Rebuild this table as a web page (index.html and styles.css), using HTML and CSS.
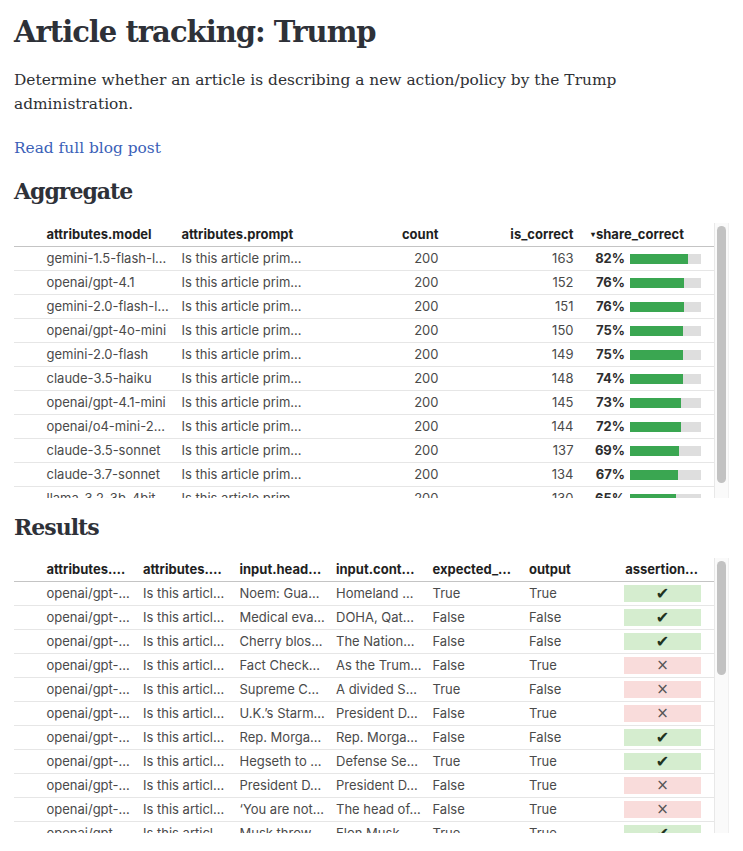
FILE: index.html
```html
<!DOCTYPE html>
<html lang="en">
<head>
<meta charset="utf-8">
<title>Article tracking: Trump</title>
<link rel="stylesheet" href="styles.css">
</head>
<body>
<main class="page">
  <h1 class="title">Article tracking: Trump</h1>
  <p class="lead">Determine whether an article is describing a new action/policy by the Trump administration.</p>
  <p class="lead link-line"><a class="link" href="#">Read full blog post</a></p>

  <h2 class="section">Aggregate</h2>
  <div class="table-frame">
    <div class="table-scroll">
      <table class="data agg">
        <colgroup>
          <col class="c-sel"><col class="c-a"><col class="c-a"><col class="c-a"><col class="c-a"><col class="c-last">
        </colgroup>
        <thead>
          <tr><th></th><th>attributes.model</th><th>attributes.prompt</th><th class="num">count</th><th class="num">is_correct</th><th class="share-h"><span class="sort">▾</span>share_correct</th></tr>
        </thead>
        <tbody>
          <tr><td></td><td>gemini-1.5-flash-l…</td><td>Is this article prim…</td><td class="num">200</td><td class="num">163</td><td class="share"><div class="share-in"><span class="pct">82%</span><span class="bar"><span class="fill" style="width:81.5%"></span></span></div></td></tr>
          <tr><td></td><td>openai/gpt-4.1</td><td>Is this article prim…</td><td class="num">200</td><td class="num">152</td><td class="share"><div class="share-in"><span class="pct">76%</span><span class="bar"><span class="fill" style="width:76%"></span></span></div></td></tr>
          <tr><td></td><td>gemini-2.0-flash-l…</td><td>Is this article prim…</td><td class="num">200</td><td class="num">151</td><td class="share"><div class="share-in"><span class="pct">76%</span><span class="bar"><span class="fill" style="width:75.5%"></span></span></div></td></tr>
          <tr><td></td><td>openai/gpt-4o-mini</td><td>Is this article prim…</td><td class="num">200</td><td class="num">150</td><td class="share"><div class="share-in"><span class="pct">75%</span><span class="bar"><span class="fill" style="width:75%"></span></span></div></td></tr>
          <tr><td></td><td>gemini-2.0-flash</td><td>Is this article prim…</td><td class="num">200</td><td class="num">149</td><td class="share"><div class="share-in"><span class="pct">75%</span><span class="bar"><span class="fill" style="width:74.5%"></span></span></div></td></tr>
          <tr><td></td><td>claude-3.5-haiku</td><td>Is this article prim…</td><td class="num">200</td><td class="num">148</td><td class="share"><div class="share-in"><span class="pct">74%</span><span class="bar"><span class="fill" style="width:74%"></span></span></div></td></tr>
          <tr><td></td><td>openai/gpt-4.1-mini</td><td>Is this article prim…</td><td class="num">200</td><td class="num">145</td><td class="share"><div class="share-in"><span class="pct">73%</span><span class="bar"><span class="fill" style="width:72.5%"></span></span></div></td></tr>
          <tr><td></td><td>openai/o4-mini-2…</td><td>Is this article prim…</td><td class="num">200</td><td class="num">144</td><td class="share"><div class="share-in"><span class="pct">72%</span><span class="bar"><span class="fill" style="width:72%"></span></span></div></td></tr>
          <tr><td></td><td>claude-3.5-sonnet</td><td>Is this article prim…</td><td class="num">200</td><td class="num">137</td><td class="share"><div class="share-in"><span class="pct">69%</span><span class="bar"><span class="fill" style="width:68.5%"></span></span></div></td></tr>
          <tr><td></td><td>claude-3.7-sonnet</td><td>Is this article prim…</td><td class="num">200</td><td class="num">134</td><td class="share"><div class="share-in"><span class="pct">67%</span><span class="bar"><span class="fill" style="width:67%"></span></span></div></td></tr>
          <tr><td></td><td>llama-3.2-3b-4bit</td><td>Is this article prim…</td><td class="num">200</td><td class="num">130</td><td class="share"><div class="share-in"><span class="pct">65%</span><span class="bar"><span class="fill" style="width:65%"></span></span></div></td></tr>
        </tbody>
      </table>
    </div>
    <div class="scrollbar"><div class="thumb thumb-agg"></div></div>
  </div>

  <h2 class="section section-res">Results</h2>
  <div class="table-frame frame-res">
    <div class="table-scroll">
      <table class="data res">
        <colgroup>
          <col class="c-sel"><col class="c-r"><col class="c-r"><col class="c-r"><col class="c-r"><col class="c-r"><col class="c-r"><col class="c-rl">
        </colgroup>
        <thead>
          <tr><th></th><th>attributes.…</th><th>attributes.…</th><th>input.head…</th><th>input.cont…</th><th>expected_…</th><th>output</th><th class="num assert-h">assertion…</th></tr>
        </thead>
        <tbody>
          <tr><td></td><td>openai/gpt-…</td><td>Is this articl…</td><td>Noem: Gua…</td><td>Homeland …</td><td>True</td><td>True</td><td class="badge-cell"><span class="badge ok">✔</span></td></tr>
          <tr><td></td><td>openai/gpt-…</td><td>Is this articl…</td><td>Medical eva…</td><td>DOHA, Qat…</td><td>False</td><td>False</td><td class="badge-cell"><span class="badge ok">✔</span></td></tr>
          <tr><td></td><td>openai/gpt-…</td><td>Is this articl…</td><td>Cherry blos…</td><td>The Nation…</td><td>False</td><td>False</td><td class="badge-cell"><span class="badge ok">✔</span></td></tr>
          <tr><td></td><td>openai/gpt-…</td><td>Is this articl…</td><td>Fact Check…</td><td>As the Trum…</td><td>False</td><td>True</td><td class="badge-cell"><span class="badge bad">×</span></td></tr>
          <tr><td></td><td>openai/gpt-…</td><td>Is this articl…</td><td>Supreme C…</td><td>A divided S…</td><td>True</td><td>False</td><td class="badge-cell"><span class="badge bad">×</span></td></tr>
          <tr><td></td><td>openai/gpt-…</td><td>Is this articl…</td><td>U.K.’s Starm…</td><td>President D…</td><td>False</td><td>True</td><td class="badge-cell"><span class="badge bad">×</span></td></tr>
          <tr><td></td><td>openai/gpt-…</td><td>Is this articl…</td><td>Rep. Morga…</td><td>Rep. Morga…</td><td>False</td><td>False</td><td class="badge-cell"><span class="badge ok">✔</span></td></tr>
          <tr><td></td><td>openai/gpt-…</td><td>Is this articl…</td><td>Hegseth to …</td><td>Defense Se…</td><td>True</td><td>True</td><td class="badge-cell"><span class="badge ok">✔</span></td></tr>
          <tr><td></td><td>openai/gpt-…</td><td>Is this articl…</td><td>President D…</td><td>President D…</td><td>False</td><td>True</td><td class="badge-cell"><span class="badge bad">×</span></td></tr>
          <tr><td></td><td>openai/gpt-…</td><td>Is this articl…</td><td>‘You are not…</td><td>The head of…</td><td>False</td><td>True</td><td class="badge-cell"><span class="badge bad">×</span></td></tr>
          <tr><td></td><td>openai/gpt-…</td><td>Is this articl…</td><td>Musk throw…</td><td>Elon Musk…</td><td>True</td><td>True</td><td class="badge-cell"><span class="badge ok">✔</span></td></tr>
          <tr><td></td><td>openai/gpt-…</td><td>Is this articl…</td><td>Trump sign…</td><td>President D…</td><td>True</td><td>True</td><td class="badge-cell"><span class="badge ok">✔</span></td></tr>
          <tr><td></td><td>openai/gpt-…</td><td>Is this articl…</td><td>Tariffs on …</td><td>The White …</td><td>True</td><td>True</td><td class="badge-cell"><span class="badge ok">✔</span></td></tr>
          <tr><td></td><td>openai/gpt-…</td><td>Is this articl…</td><td>Harvard fi…</td><td>Harvard Un…</td><td>False</td><td>True</td><td class="badge-cell"><span class="badge bad">×</span></td></tr>
        </tbody>
      </table>
    </div>
    <div class="scrollbar"><div class="thumb thumb-res"></div></div>
  </div>
</main>
</body>
</html>
```

FILE: styles.css
```css
html, body {
  margin: 0;
  padding: 0;
  background: #fff;
}

.page {
  padding: 0 14px;
  color: #2e3034;
  font-family: "DejaVu Serif", "Liberation Serif", serif;
}

.title {
  margin: 13px 0 0;
  font-size: 29px;
  line-height: 38px;
  font-weight: 700;
  letter-spacing: -1px;
  color: #2e3138;
}

.lead {
  margin: 17px 0 0;
  font-size: 15.4px;
  line-height: 24px;
  max-width: 640px;
}

.link-line {
  margin-top: 20px;
}

.link {
  color: #3b5fb8;
  text-decoration: none;
}

.section {
  margin: 16px 0 0;
  font-size: 22px;
  line-height: 30px;
  font-weight: 700;
  letter-spacing: -1px;
  color: #2e3138;
}

.table-frame {
  display: flex;
  margin-top: 17px;
  width: 715px;
}

.section-res {
  margin-top: 14px;
}

.frame-res {
  margin-top: 16px;
}

.table-scroll {
  width: 700px;
  max-height: 275px;
  overflow: hidden;
}

.scrollbar {
  box-sizing: border-box;
  width: 15px;
  background: #fafafa;
  border-left: 1px solid #e8e8e8;
  border-right: 1px solid #f0f0f0;
  padding: 3px 2px 0 2px;
}

.thumb {
  width: 9px;
  border-radius: 5px;
  background: #c2c2c2;
}

.thumb-agg { height: 257px; }
.thumb-res { height: 114px; }

.data {
  width: 700px;
  table-layout: fixed;
  border-collapse: collapse;
  font-family: Inter, "Noto Sans", "Liberation Sans", sans-serif;
  font-size: 13px;
  line-height: 17px;
  color: #4a4a4a;
}

.c-sel { width: 26px; }
.c-a { width: 135px; }
.c-last { width: 134px; }
.c-r { width: 96.5px; }
.c-rl { width: 95px; }

.data th,
.data td {
  padding: 3px 2px 3px 6.5px;
  height: 17px;
  white-space: nowrap;
  overflow: hidden;
  text-overflow: ellipsis;
  text-align: left;
  border-bottom: 1px solid #e6e6e6;
}

.data th {
  position: sticky;
  top: 0;
  background: #fff;
  color: #1f1f1f;
  font-weight: 700;
  border-bottom: 1px solid #c4c4c4;
}

.data .num {
  text-align: right;
  padding-right: 6.5px;
}

.sort {
  font-size: 8px;
  margin-right: 1px;
  vertical-align: 2px;
}

.data .share-h,
.data .share {
  padding-left: 11px;
}

.share-in {
  display: flex;
  align-items: center;
  height: 17px;
  font-weight: 700;
  color: #2e2e2e;
}

.pct {
  width: 34px;
  text-align: right;
  margin-right: 5px;
}

.bar {
  width: 71px;
  height: 10px;
  background: #dedede;
}

.fill {
  display: block;
  height: 100%;
  background: #3aa651;
}

.data .assert-h {
  padding-right: 16px;
  padding-left: 0;
}

.data .badge-cell {
  padding: 3px 13px 3px 5px;
}

.badge {
  display: block;
  height: 17px;
  line-height: 17px;
  text-align: center;
  font-family: "DejaVu Sans", sans-serif;
}

.badge.ok {
  background: #d5edcf;
  color: #22331f;
  font-size: 16px;
}

.badge.bad {
  background: #f9dcdb;
  color: #555;
  font-size: 15px;
}
```
